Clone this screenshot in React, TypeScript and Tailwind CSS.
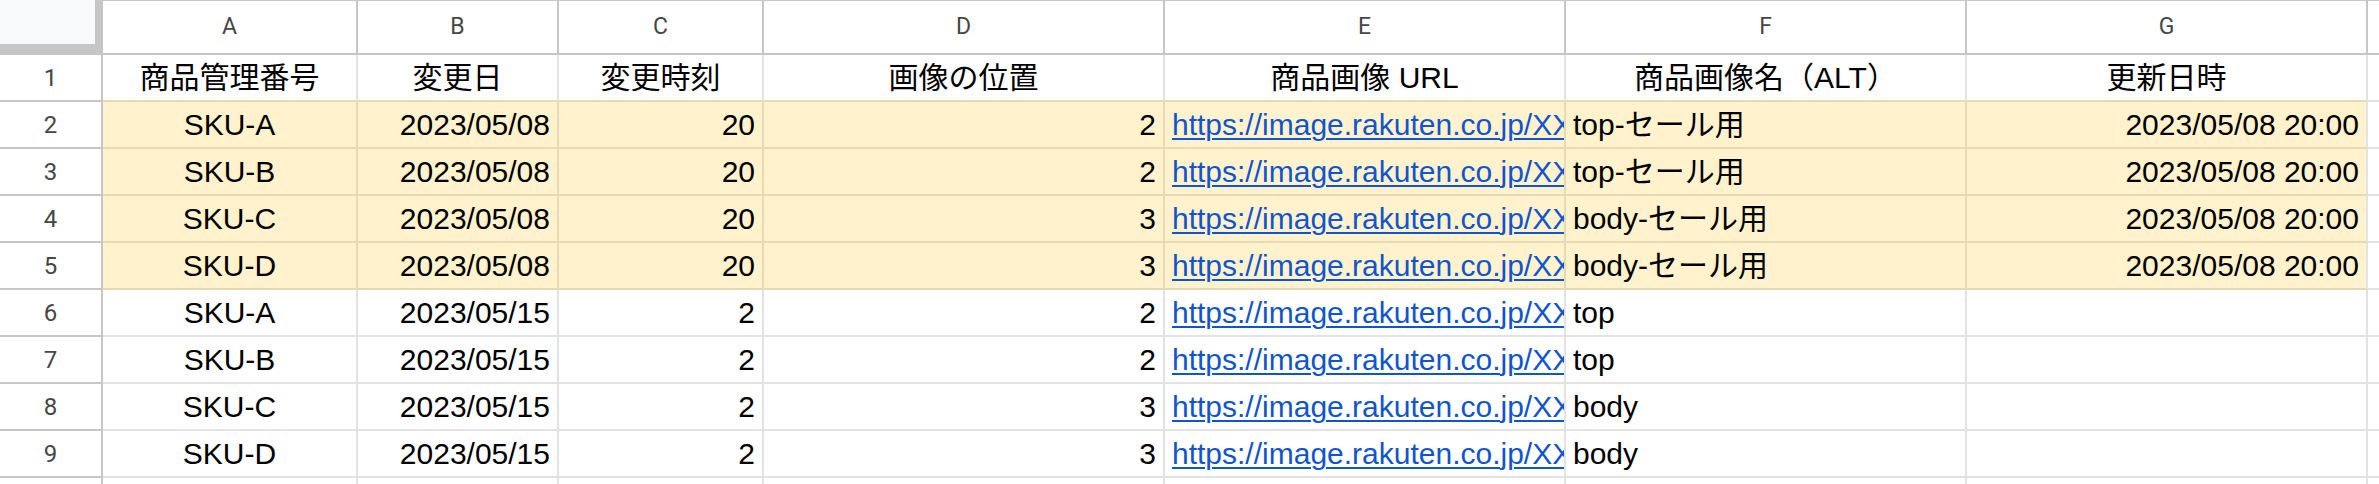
import React from "react";

type Row = {
  sku: string;
  date: string;
  time: string;
  pos: string;
  url: string;
  alt: string;
  updated: string;
  yellow: boolean;
};

const URL_TEXT = "https://image.rakuten.co.jp/XXXXXXXX/cabinet/item/sample.jpg";

const rows: Row[] = [
  { sku: "SKU-A", date: "2023/05/08", time: "20", pos: "2", url: URL_TEXT, alt: "top-セール用", updated: "2023/05/08 20:00", yellow: true },
  { sku: "SKU-B", date: "2023/05/08", time: "20", pos: "2", url: URL_TEXT, alt: "top-セール用", updated: "2023/05/08 20:00", yellow: true },
  { sku: "SKU-C", date: "2023/05/08", time: "20", pos: "3", url: URL_TEXT, alt: "body-セール用", updated: "2023/05/08 20:00", yellow: true },
  { sku: "SKU-D", date: "2023/05/08", time: "20", pos: "3", url: URL_TEXT, alt: "body-セール用", updated: "2023/05/08 20:00", yellow: true },
  { sku: "SKU-A", date: "2023/05/15", time: "2", pos: "2", url: URL_TEXT, alt: "top", updated: "", yellow: false },
  { sku: "SKU-B", date: "2023/05/15", time: "2", pos: "2", url: URL_TEXT, alt: "top", updated: "", yellow: false },
  { sku: "SKU-C", date: "2023/05/15", time: "2", pos: "3", url: URL_TEXT, alt: "body", updated: "", yellow: false },
  { sku: "SKU-D", date: "2023/05/15", time: "2", pos: "3", url: URL_TEXT, alt: "body", updated: "", yellow: false },
];

const cols = ["A", "B", "C", "D", "E", "F", "G"];
const headers = ["商品管理番号", "変更日", "変更時刻", "画像の位置", "商品画像 URL", "商品画像名（ALT）", "更新日時"];

const hdrFont = "font-['Roboto','Liberation_Sans',sans-serif] text-[#444746]";
const cellFont = "font-['Liberation_Sans','Noto_Sans_CJK_JP',sans-serif] text-[30px] leading-[34px] text-black";

function ColHeader({ label }: { label: string }) {
  return (
    <div className={`h-[55px] bg-white border-t border-t-[#c4c7c5] border-r-2 border-r-[#c4c7c5] border-b-2 border-b-[#c4c7c5] flex items-center justify-center text-[23px] ${hdrFont}`}>
      {label}
    </div>
  );
}

function RowHeader({ n }: { n: number }) {
  return (
    <div className={`h-[47px] bg-white border-r-2 border-r-[#c4c7c5] border-b-2 border-b-[#c4c7c5] flex items-center justify-center text-[24px] ${hdrFont}`}>
      {n}
    </div>
  );
}

function Cell({
  children,
  align,
  yellow,
  bottomTan,
  last,
  link,
}: {
  children?: React.ReactNode;
  align: "left" | "center" | "right";
  yellow: boolean;
  bottomTan?: boolean;
  last?: boolean;
  link?: boolean;
}) {
  const bg = yellow ? "bg-[#fff2cc]" : "bg-white";
  const br = yellow && !last ? "border-r-[#e6dab4]" : "border-r-[#e1e3e3]";
  const bb = yellow || bottomTan ? "border-b-[#e6dab4]" : "border-b-[#e1e3e3]";
  const al = align === "left" ? "justify-start" : align === "center" ? "justify-center" : "justify-end";
  return (
    <div className={`h-[47px] border-r-2 border-b-2 ${br} ${bb} ${bg} flex items-center ${al} px-[7px] overflow-hidden whitespace-nowrap ${cellFont}`}>
      {link ? <span className="text-[#1155cc] underline decoration-[2px] underline-offset-[3px]">{children}</span> : children}
    </div>
  );
}

export default function App() {
  return (
    <div className="w-[2379px] h-[484px] overflow-hidden bg-white">
      <div className="grid grid-cols-[103px_255px_201px_205px_401px_401px_401px_401px_11px]">
        {/* corner */}
        <div className="h-[55px] bg-[#c6c6c6]">
          <div className="w-[95px] h-[44px] bg-[#f8f9fa]" />
        </div>
        {cols.map((c) => (
          <ColHeader key={c} label={c} />
        ))}
        <div className="h-[55px] bg-white border-t border-t-[#c4c7c5] border-b-2 border-b-[#c4c7c5]" />

        {/* row 1 headers */}
        <RowHeader n={1} />
        {headers.map((h) => (
          <Cell key={h} align="center" yellow={false} bottomTan>
            {h}
          </Cell>
        ))}
        <div className="h-[47px] bg-white border-b-2 border-b-[#e1e3e3]" />

        {rows.map((r, i) => (
          <React.Fragment key={i}>
            <RowHeader n={i + 2} />
            <Cell align="center" yellow={r.yellow}>{r.sku}</Cell>
            <Cell align="right" yellow={r.yellow}>{r.date}</Cell>
            <Cell align="right" yellow={r.yellow}>{r.time}</Cell>
            <Cell align="right" yellow={r.yellow}>{r.pos}</Cell>
            <Cell align="left" yellow={r.yellow} link>{r.url}</Cell>
            <Cell align="left" yellow={r.yellow}>{r.alt}</Cell>
            <Cell align="right" yellow={r.yellow} last>{r.updated}</Cell>
            <div className="h-[47px] bg-white border-b-2 border-b-[#e1e3e3]" />
          </React.Fragment>
        ))}

        {/* partial row 10 */}
        <div className="h-[20px] bg-white border-r-2 border-r-[#c4c7c5]" />
        {cols.map((c) => (
          <div key={c} className="h-[20px] bg-white border-r-2 border-r-[#e1e3e3]" />
        ))}
        <div className="h-[20px] bg-white" />
      </div>
    </div>
  );
}
